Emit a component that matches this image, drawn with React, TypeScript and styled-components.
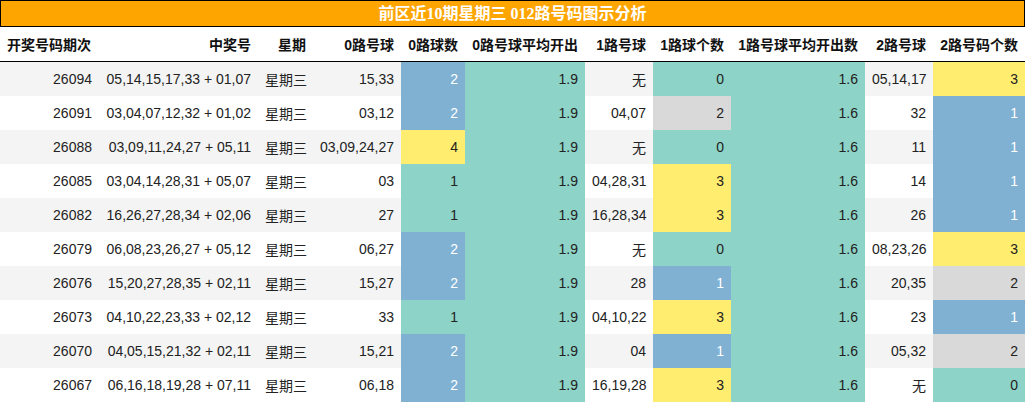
import React from 'react';
import styled, { createGlobalStyle } from 'styled-components';

const GlobalStyle = createGlobalStyle`
  body {
    margin: 0;
    background: #fff;
    font-family: "Liberation Sans", "Noto Sans CJK SC", sans-serif;
  }
`

const palette = {
  teal: '#8DD3C7',
  blue: '#80B1D3',
  yellow: '#FFED6F',
  gray: '#D9D9D9',
}

type Tone = keyof typeof palette

const Wrapper = styled.div`
  width: 1025px;
`

const Title = styled.div`
  height: 25px;
  border: 1px solid #000;
  background: #FFA500;
  color: #fff;
  font-family: "Liberation Serif", "Noto Sans CJK SC", serif;
  font-weight: bold;
  font-size: 16px;
  line-height: 25px;
  text-align: center;
`

const Table = styled.table`
  width: 1025px;
  border-collapse: collapse;
  table-layout: fixed;
  font-size: 14px;
  color: #222;
`

const HeadCell = styled.th`
  height: 34px;
  padding: 0 7px;
  border-bottom: 1px solid #000;
  text-align: right;
  font-weight: bold;
  color: #111;
  white-space: nowrap;
  &:first-child {
    text-align: left;
  }
`

const Row = styled.tr<{ $stripe: boolean }>`
  background: ${p => (p.$stripe ? '#F4F4F4' : '#fff')};
`

const Cell = styled.td<{ $tone?: Tone }>`
  height: 34px;
  padding: 0 7px;
  text-align: right;
  white-space: nowrap;
  background: ${p => (p.$tone ? palette[p.$tone] : 'transparent')};
  color: ${p => (p.$tone === 'blue' ? '#fff' : '#222')};
`

const widths = [99, 159, 55, 88, 64, 120, 68, 78, 134, 68, 92]

const headers = [
  '开奖号码期次', '中奖号', '星期', '0路号球', '0路球数', '0路号球平均开出',
  '1路号球', '1路球个数', '1路号球平均开出数', '2路号球', '2路号码个数',
]

type Draw = {
  issue: string
  nums: string
  z0: string; c0: number; t0: Tone
  z1: string; c1: number; t1: Tone
  z2: string; c2: number; t2: Tone
}

const draws: Draw[] = [
  { issue: '26094', nums: '05,14,15,17,33 + 01,07', z0: '15,33', c0: 2, t0: 'blue', z1: '无', c1: 0, t1: 'teal', z2: '05,14,17', c2: 3, t2: 'yellow' },
  { issue: '26091', nums: '03,04,07,12,32 + 01,02', z0: '03,12', c0: 2, t0: 'blue', z1: '04,07', c1: 2, t1: 'gray', z2: '32', c2: 1, t2: 'blue' },
  { issue: '26088', nums: '03,09,11,24,27 + 05,11', z0: '03,09,24,27', c0: 4, t0: 'yellow', z1: '无', c1: 0, t1: 'teal', z2: '11', c2: 1, t2: 'blue' },
  { issue: '26085', nums: '03,04,14,28,31 + 05,07', z0: '03', c0: 1, t0: 'teal', z1: '04,28,31', c1: 3, t1: 'yellow', z2: '14', c2: 1, t2: 'blue' },
  { issue: '26082', nums: '16,26,27,28,34 + 02,06', z0: '27', c0: 1, t0: 'teal', z1: '16,28,34', c1: 3, t1: 'yellow', z2: '26', c2: 1, t2: 'blue' },
  { issue: '26079', nums: '06,08,23,26,27 + 05,12', z0: '06,27', c0: 2, t0: 'blue', z1: '无', c1: 0, t1: 'teal', z2: '08,23,26', c2: 3, t2: 'yellow' },
  { issue: '26076', nums: '15,20,27,28,35 + 02,11', z0: '15,27', c0: 2, t0: 'blue', z1: '28', c1: 1, t1: 'blue', z2: '20,35', c2: 2, t2: 'gray' },
  { issue: '26073', nums: '04,10,22,23,33 + 02,12', z0: '33', c0: 1, t0: 'teal', z1: '04,10,22', c1: 3, t1: 'yellow', z2: '23', c2: 1, t2: 'blue' },
  { issue: '26070', nums: '04,05,15,21,32 + 02,11', z0: '15,21', c0: 2, t0: 'blue', z1: '04', c1: 1, t1: 'blue', z2: '05,32', c2: 2, t2: 'gray' },
  { issue: '26067', nums: '06,16,18,19,28 + 07,11', z0: '06,18', c0: 2, t0: 'blue', z1: '16,19,28', c1: 3, t1: 'yellow', z2: '无', c2: 0, t2: 'teal' },
]

export default function App() {
  return (
    <Wrapper>
      <GlobalStyle />
      <Title>前区近10期星期三 012路号码图示分析</Title>
      <Table>
        <colgroup>
          {widths.map((w, i) => <col key={i} style={{ width: w }} />)}
        </colgroup>
        <thead>
          <tr>
            {headers.map(h => <HeadCell key={h}>{h}</HeadCell>)}
          </tr>
        </thead>
        <tbody>
          {draws.map((d, i) => (
            <Row key={d.issue} $stripe={i % 2 === 0}>
              <Cell>{d.issue}</Cell>
              <Cell>{d.nums}</Cell>
              <Cell>星期三</Cell>
              <Cell>{d.z0}</Cell>
              <Cell $tone={d.t0}>{d.c0}</Cell>
              <Cell $tone="teal">1.9</Cell>
              <Cell>{d.z1}</Cell>
              <Cell $tone={d.t1}>{d.c1}</Cell>
              <Cell $tone="teal">1.6</Cell>
              <Cell>{d.z2}</Cell>
              <Cell $tone={d.t2}>{d.c2}</Cell>
            </Row>
          ))}
        </tbody>
      </Table>
    </Wrapper>
  )
}
